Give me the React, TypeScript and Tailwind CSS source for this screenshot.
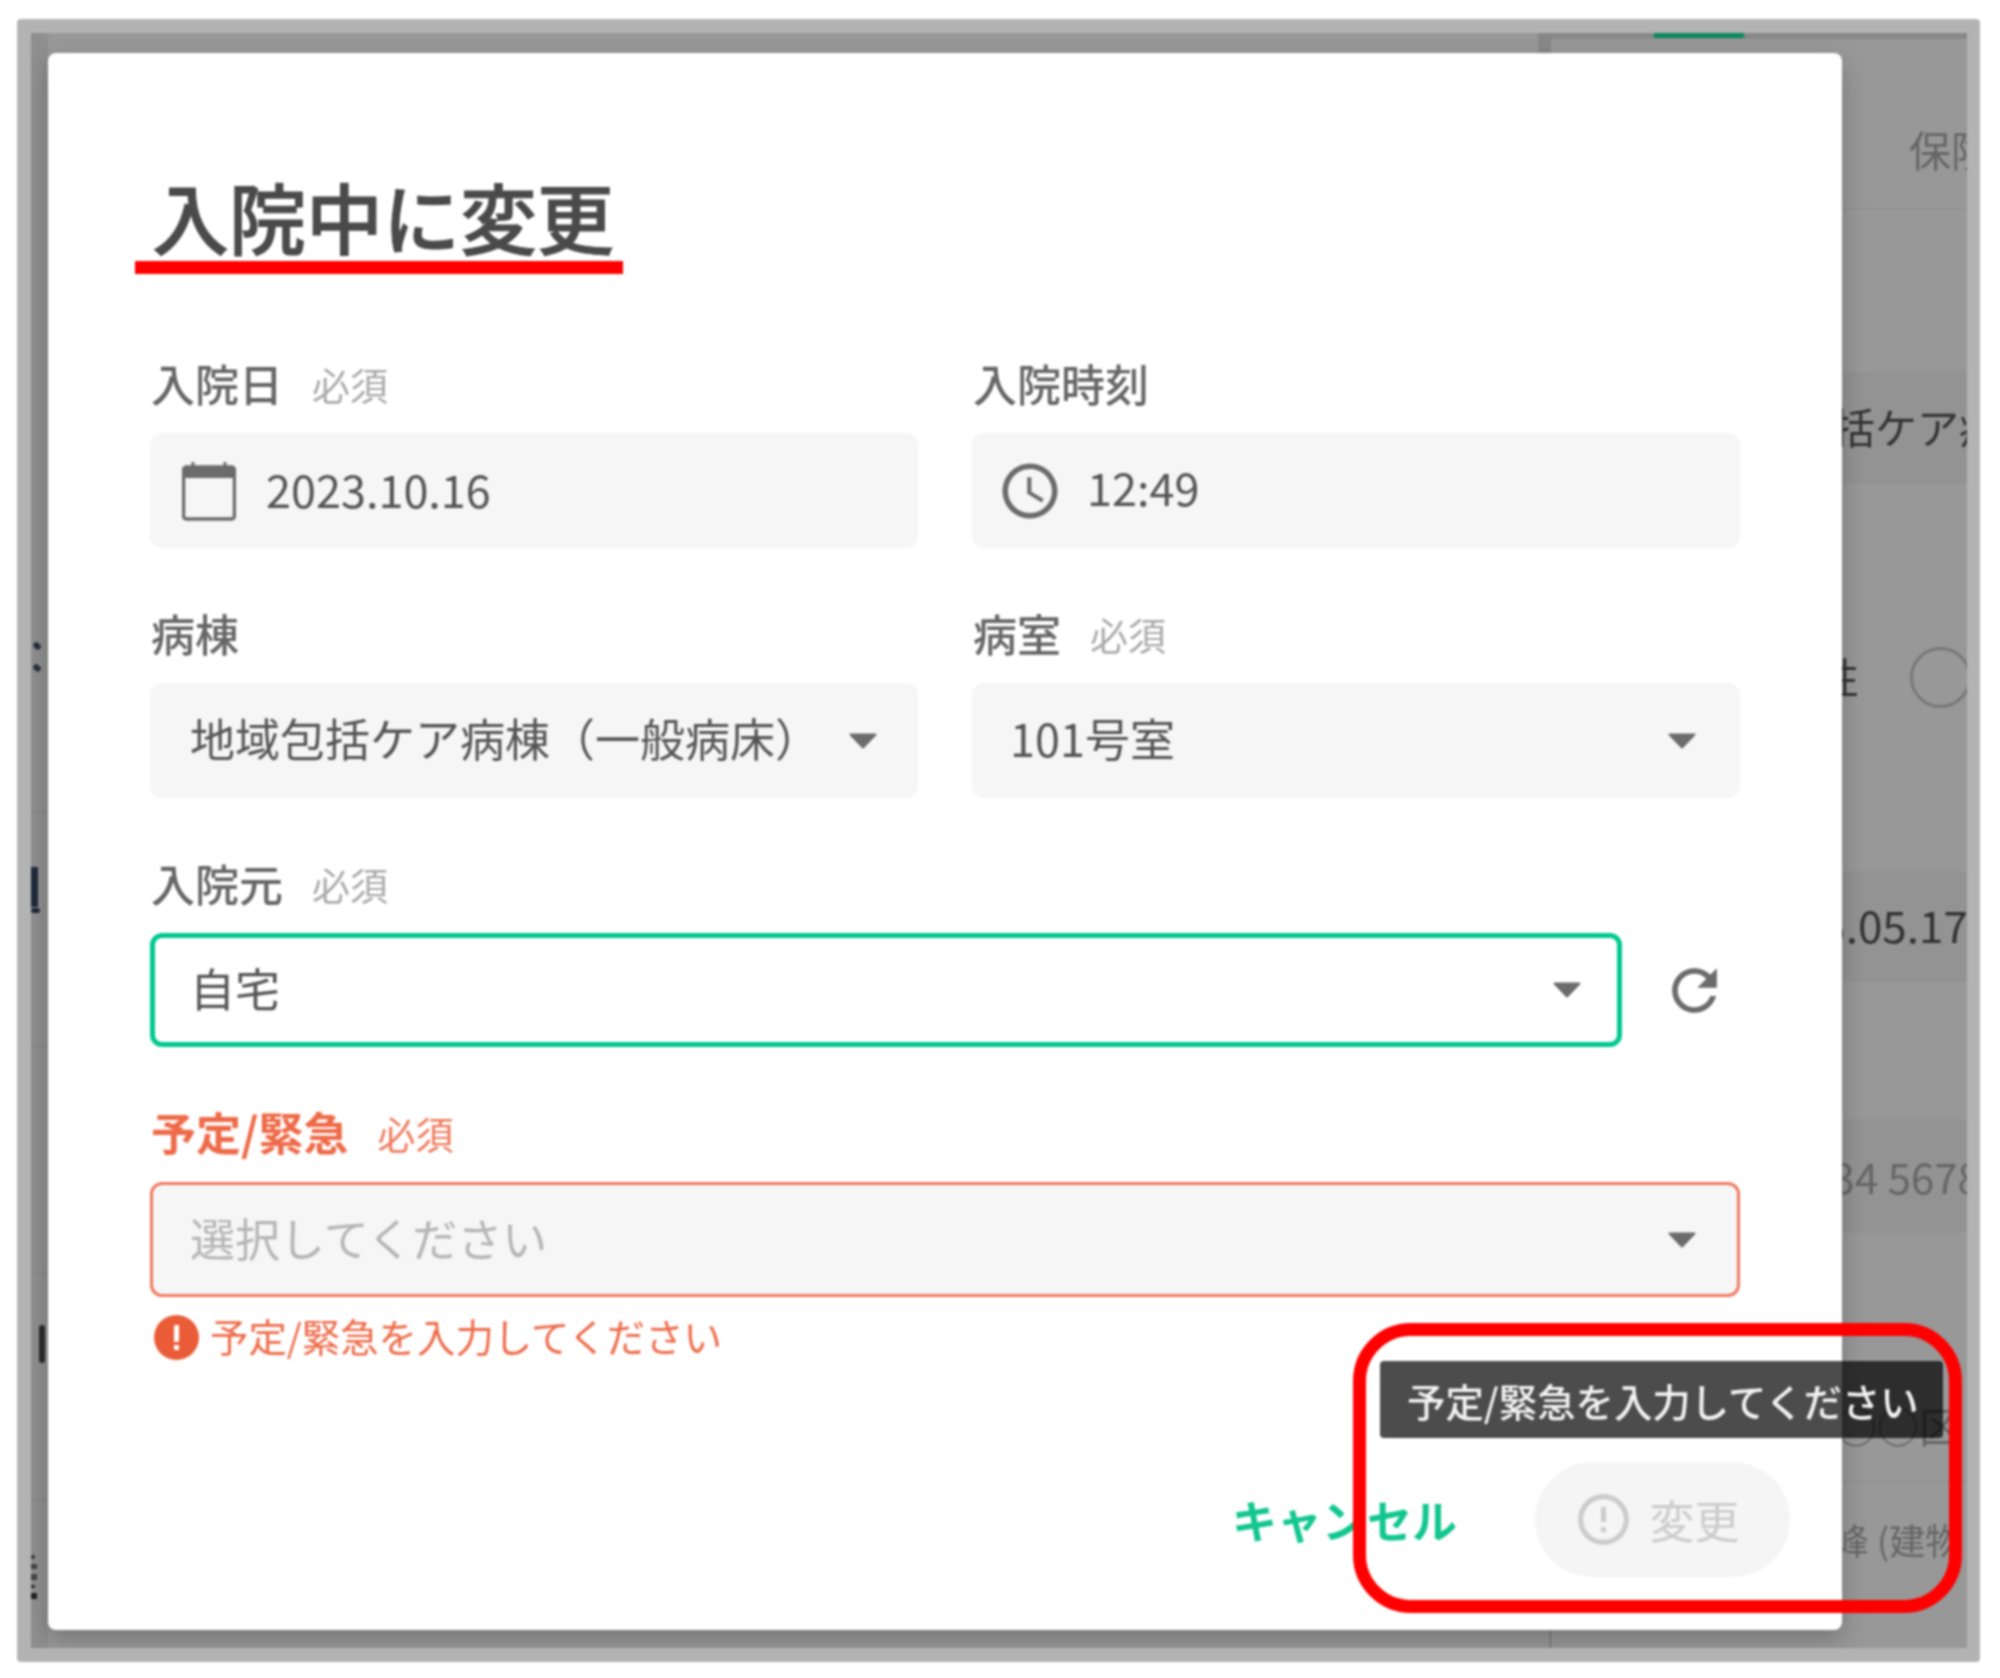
function Caret() {
  return (
    <svg width="28" height="16" viewBox="0 0 28 16" className="shrink-0">
      <path d="M1.5 1.5h25L14 14.5z" fill="#6b6b6b" stroke="#6b6b6b" strokeWidth="2" strokeLinejoin="round" />
    </svg>
  );
}

function FieldLabel({ label, required, error }: { label: string; required?: boolean; error?: boolean }) {
  return (
    <div className="flex h-[60px] items-center gap-[29px] pb-[6px] pl-[1px]">
      <span className={error ? 'text-[45px] font-bold text-[#ee6a48]' : 'text-[44px] font-medium text-[#666666]'}>{label}</span>
      {required && <span className={error ? 'text-[38px] text-[#ef7a5c]' : 'text-[38px] text-[#aaaaaa]'}>必須</span>}
    </div>
  );
}

function SelectBox({ value, inset }: { value: string; inset: string }) {
  return (
    <div className={inset}>
      <span className="pb-[5px] text-[45px] text-[#555555]">{value}</span>
      <Caret />
    </div>
  );
}

function BackgroundPage() {
  return (
    <div className="flex h-full w-full justify-between">
      {/* left edge of the page under the modal */}
      <div className="flex w-[17px] flex-col bg-[#8f8f8f]">
        <div className="h-[610px]" />
        <div className="ml-[2px] h-[6px] w-[8px] rotate-45 rounded-full bg-[#26313f]" />
        <div className="h-[16px]" />
        <div className="ml-[2px] h-[6px] w-[8px] rotate-45 rounded-full bg-[#26313f]" />
        <div className="h-[142px] border-b border-[#858585]" />
        <div className="h-[54px]" />
        <div className="h-[40px] w-[7px] bg-[#1f2a3a]" />
        <div className="mt-[1px] h-[5px] w-[9px] rounded-full bg-[#1f2a3a]" />
        <div className="h-[133px] border-b border-[#858585]" />
        <div className="h-[227px] border-b border-[#858585]" />
        <div className="h-[52px]" />
        <div className="ml-[8px] h-[38px] w-[6px] rounded-full bg-[#2b2b2b]" />
        <div className="h-[138px] border-b border-[#858585]" />
        <div className="h-[54px]" />
        <div className="flex h-[44px] w-[6px] flex-col gap-[5px]">
          <div className="h-[4px] w-[4px] rounded-full bg-[#333333]" />
          <div className="h-[6px] w-[6px] bg-[#444444]" />
          <div className="h-[6px] w-[6px] bg-[#444444]" />
          <div className="h-[4px] w-[4px] bg-[#333333]" />
          <div className="h-[6px] w-[6px] bg-[#222222]" />
        </div>
      </div>
      {/* right column of the page under the modal */}
      <div className="relative flex w-[417px] flex-col border-l border-[#6e6e6e] text-[42px] leading-none">
        <div className="absolute -left-[13px] top-0 h-[20px] w-[13px] bg-[#888888]" />
        <div className="flex h-[6px] bg-[#888888] pl-[103px]">
          <div className="h-[5px] w-[90px] bg-[#0a8a5e]" />
        </div>
        <div className="flex h-[170px] items-center whitespace-nowrap border-b border-[#8c8c8c] pl-[358px] pt-[51px] text-[#666666]">
          保険情報
        </div>
        <div className="h-[162px]" />
        <div className="flex h-[113px] items-center whitespace-nowrap bg-[#939393] pb-[3px] pl-[240px] text-[#333333]">
          包括ケア病棟
        </div>
        <div className="flex h-[387px] items-center whitespace-nowrap pl-[266px] text-[#333333]">
          <span className="pb-[4px]">性</span>
          <div className="ml-[51px] size-[61px] shrink-0 rounded-full border-[3px] border-[#787878]" />
        </div>
        <div className="flex h-[111px] items-center whitespace-nowrap bg-[#939393] pb-[5px] pl-[197px] text-[44px] text-[#333333]">
          1975.05.17
        </div>
        <div className="h-[137px]" />
        <div className="flex h-[114px] items-center whitespace-nowrap bg-[#939393] pl-[234px] text-[#666666]">
          1234 5678
        </div>
        <div className="h-[249px] whitespace-nowrap border-b border-[#8c8c8c] pl-[284px] pt-[171px] text-[#666666]">
          ○○区
        </div>
        <div className="whitespace-nowrap pl-[282px] pt-[39px] text-[36px] text-[#666666]">峰 (建物</div>
      </div>
    </div>
  );
}

export default function App() {
  return (
    <div className="h-[1678px] w-[2000px] overflow-hidden bg-white pl-[17px] pt-[19px] font-['Noto_Sans_CJK_JP','Noto_Sans',sans-serif] blur-[0.8px]">
      <div className="h-[1643px] w-[1963px] rounded-[4px] bg-[#b3b3b3] p-[14px]">
        <div className="relative h-[1615px] w-[1936px] overflow-hidden bg-[#989898]">
          <BackgroundPage />

          <div className="absolute left-[17px] top-[20px] flex h-[1577px] w-[1794px] flex-col rounded-[8px] bg-white px-[102px] pt-[113px] shadow-[0_10px_24px_rgba(0,0,0,0.22)]">
            <h1 className="mb-[90px] h-[100px] pl-[2px] text-[77px] font-medium leading-[100px] text-[#4a4a4a] [-webkit-text-stroke:1px_#4a4a4a]">入院中に変更</h1>

            <div className="grid grid-cols-2 gap-x-[54px] gap-y-[58px]">
              <div className="flex flex-col gap-[17px]">
                <FieldLabel label="入院日" required />
                <div className="flex h-[115px] items-center gap-[30px] rounded-[12px] bg-[#f6f6f6] pl-[32px]">
                  <svg width="54" height="60" viewBox="0 0 54 60" className="shrink-0">
                    <path d="M11 1v8M43 1v8" stroke="#6b6b6b" strokeWidth="3" />
                    <rect x="1.5" y="6" width="51" height="52" rx="3" fill="none" stroke="#6b6b6b" strokeWidth="3.5" />
                    <rect x="1.5" y="6" width="51" height="11" fill="#6b6b6b" />
                  </svg>
                  <span className="pb-[3px] text-[45px] text-[#555555]">2023.10.16</span>
                </div>
              </div>
              <div className="flex flex-col gap-[17px]">
                <FieldLabel label="入院時刻" />
                <div className="flex h-[115px] items-center gap-[24px] rounded-[12px] bg-[#f6f6f6] pl-[25px]">
                  <svg width="66" height="66" viewBox="0 0 24 24" fill="#6b6b6b" className="shrink-0">
                    <path d="M11.99 2C6.47 2 2 6.48 2 12s4.47 10 9.99 10C17.52 22 22 17.52 22 12S17.52 2 11.99 2zM12 20c-4.42 0-8-3.58-8-8s3.58-8 8-8 8 3.58 8 8-3.58 8-8 8z" />
                    <path d="M12.5 7H11v6l5.25 3.15.75-1.23-4.5-2.67z" />
                  </svg>
                  <span className="pb-[7px] text-[45px] text-[#555555]">12:49</span>
                </div>
              </div>
              <div className="flex flex-col gap-[17px]">
                <FieldLabel label="病棟" />
                <SelectBox
                  value="地域包括ケア病棟（一般病床）"
                  inset="flex h-[115px] items-center justify-between rounded-[12px] bg-[#f6f6f6] pl-[40px] pr-[41px]"
                />
              </div>
              <div className="flex flex-col gap-[17px]">
                <FieldLabel label="病室" required />
                <SelectBox
                  value="101号室"
                  inset="flex h-[115px] items-center justify-between rounded-[12px] bg-[#f6f6f6] pl-[38px] pr-[44px]"
                />
              </div>
            </div>

            <div className="mt-[58px] flex flex-col gap-[17px]">
              <FieldLabel label="入院元" required />
              <div className="flex items-center">
                <div className="flex h-[114px] w-[1472px] items-center justify-between rounded-[12px] border-[5px] border-[#00c98f] bg-white pl-[35px] pr-[36px]">
                  <span className="pb-[5px] text-[45px] text-[#555555]">自宅</span>
                  <Caret />
                </div>
                <svg width="67" height="67" viewBox="0 0 24 24" fill="#6b6b6b" className="ml-[39px] shrink-0">
                  <path d="M17.65 6.35C16.2 4.9 14.21 4 12 4c-4.42 0-7.99 3.58-7.99 8s3.57 8 7.99 8c3.73 0 6.84-2.55 7.73-6h-2.08c-.82 2.33-3.04 4-5.65 4-3.31 0-6-2.69-6-6s2.69-6 6-6c1.66 0 3.14.69 4.22 1.78L13 11h7V4l-2.35 2.35z" />
                </svg>
              </div>
            </div>

            <div className="mt-[58px] flex flex-col gap-[17px]">
              <FieldLabel label="予定/緊急" required error />
              <div className="flex h-[115px] items-center justify-between rounded-[12px] border-[3px] border-[#f07a60] bg-[#f6f6f6] pl-[37px] pr-[41px]">
                <span className="pb-[3px] text-[45px] text-[#b5b5b5]">選択してください</span>
                <Caret />
              </div>
            </div>

            <div className="mt-[17px] flex h-[50px] items-center gap-[11px] pl-[4px]">
              <svg width="45" height="45" viewBox="0 0 45 45" className="mb-[3px] shrink-0">
                <circle cx="22.5" cy="22.5" r="22.5" fill="#ea5c37" />
                <rect x="20" y="10" width="5" height="17" rx="1" fill="#ffffff" />
                <rect x="20" y="30" width="5" height="5" rx="1" fill="#ffffff" />
              </svg>
              <span className="pb-[6px] text-[38.4px] text-[#ee6a48]">予定/緊急を入力してください</span>
            </div>

            <div className="mt-auto flex items-center justify-end gap-[78px] pb-[53px]">
              <span className="text-[45px] font-bold text-[#12c690]">キャンセル</span>
              <div className="-mr-[50px] flex h-[115px] w-[255px] items-center justify-center gap-[15px] rounded-full bg-[#f5f5f5] pr-[12px]">
                <svg width="61" height="61" viewBox="0 0 24 24" fill="#cccccc" className="shrink-0">
                  <path d="M11 15h2v2h-2zm0-8h2v6h-2zm.99-5C6.47 2 2 6.48 2 12s4.47 10 9.99 10C17.52 22 22 17.52 22 12S17.52 2 11.99 2zM12 20c-4.42 0-8-3.58-8-8s3.58-8 8-8 8 3.58 8 8-3.58 8-8 8z" />
                </svg>
                <span className="text-[45px] text-[#cccccc]">変更</span>
              </div>
            </div>

            {/* tooltip over the disabled button */}
            <div className="absolute left-[1332px] top-[1308px] flex h-[77px] w-[563px] items-center whitespace-nowrap rounded-[4px] bg-black/70 pl-[27px] pt-[3px] text-[38.4px] font-medium text-[#f2f2f2]">
              予定/緊急を入力してください
            </div>

            {/* red annotations drawn on the screenshot */}
            <div className="absolute left-[87px] top-[208px] h-[13px] w-[488px] bg-[#ff0000]" />
            <div className="absolute left-[1305px] top-[1270px] h-[290px] w-[609px] rounded-[58px] border-[13px] border-[#ff0000]" />
          </div>
        </div>
      </div>
    </div>
  );
}
